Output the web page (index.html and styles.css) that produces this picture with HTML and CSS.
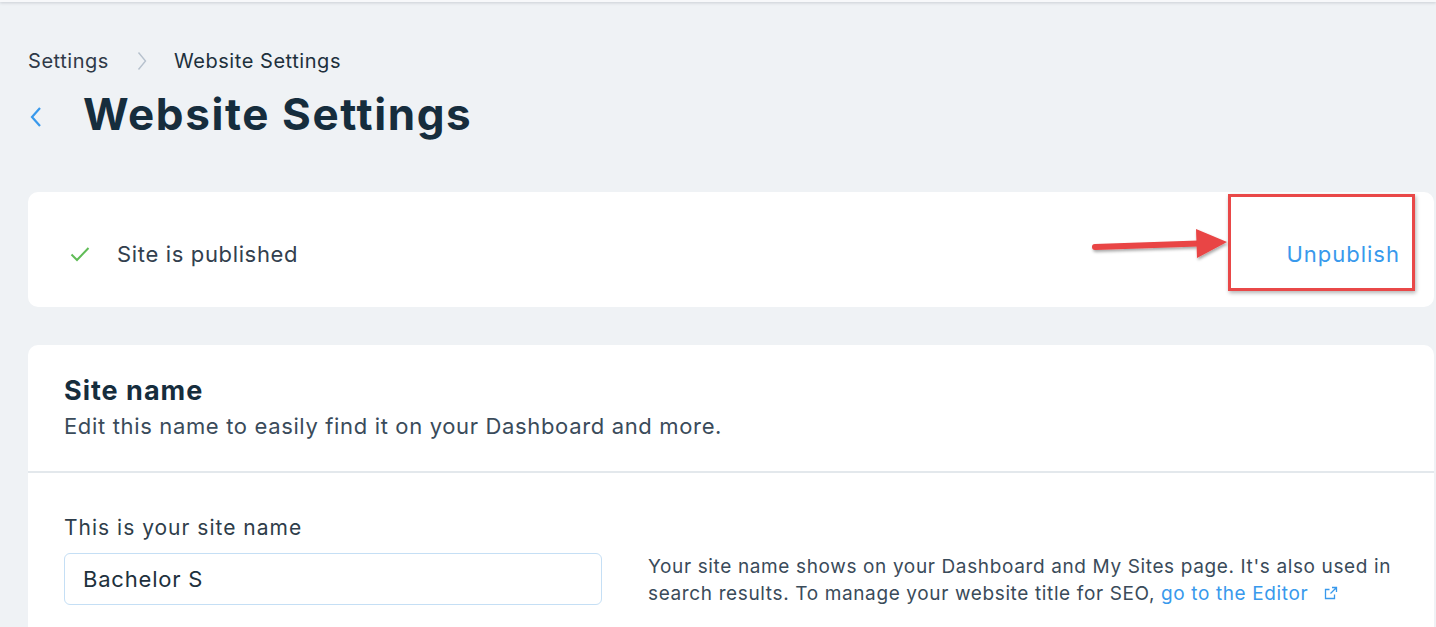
FILE: index.html
```html
<!DOCTYPE html>
<html lang="en">
<head>
<meta charset="utf-8">
<title>Website Settings</title>
<link rel="stylesheet" href="styles.css">
</head>
<body>
<div class="topbar"></div>
<main class="page">
  <nav class="crumbs">
    <span class="crumb">Settings</span>
    <svg class="crumb-sep" width="10" height="20" viewBox="0 0 10 20"><path d="M1.5 1.5 L8.5 10 L1.5 18.5" fill="none" stroke="#b6c1cd" stroke-width="1.4"/></svg>
    <span class="crumb current">Website Settings</span>
  </nav>
  <header class="title-row">
    <svg class="back" width="14" height="22" viewBox="0 0 14 22"><path d="M11 2 L3 11 L11 20" fill="none" stroke="#3899ec" stroke-width="2.2"/></svg>
    <h1 class="title">Website Settings</h1>
  </header>

  <section class="card status-card">
    <div class="status">
      <svg class="check" width="20" height="16" viewBox="0 0 20 16"><path d="M1.5 8.5 L7 14 L18.5 2" fill="none" stroke="#60bc57" stroke-width="2"/></svg>
      <span class="status-text">Site is published</span>
    </div>
    <a class="link unpublish">Unpublish</a>
    <div class="annot-box"></div>
    <svg class="annot-arrow" width="150" height="44" viewBox="0 0 150 44">
      <defs>
        <filter id="sh" x="-10%" y="-30%" width="130%" height="180%">
          <feDropShadow dx="1" dy="2" stdDeviation="1.5" flood-color="#000" flood-opacity="0.35"/>
        </filter>
      </defs>
      <g filter="url(#sh)">
        <path d="M5 25 L108 21.5" stroke="#e94444" stroke-width="6" stroke-linecap="round" fill="none"/>
        <path d="M106 7 L137 20 L107 36 Z" fill="#e94444"/>
      </g>
    </svg>
  </section>

  <section class="card name-card">
    <div class="card-head">
      <h2 class="card-title">Site name</h2>
      <p class="card-sub">Edit this name to easily find it on your Dashboard and more.</p>
    </div>
    <div class="card-body">
      <div class="field">
        <label class="field-label">This is your site name</label>
        <div class="input">Bachelor S</div>
      </div>
      <p class="help">Your site name shows on your Dashboard and My Sites page. It's also used in search results. To manage your website title for SEO, <a class="link">go to the Editor</a><svg class="ext" width="16" height="16" viewBox="0 0 16 16"><path d="M9 2.5 H13.5 V7 M13.5 2.5 L7.5 8.5 M11.5 9.5 V13.5 H2.5 V4.5 H6.5" fill="none" stroke="#3899ec" stroke-width="1.3"/></svg></p>
    </div>
  </section>
</main>
</body>
</html>
```

FILE: styles.css
```css
* { box-sizing: border-box; }
html, body { margin: 0; padding: 0; }
body {
  background: #eff2f5;
  font-family: "Inter", "Open Sans", sans-serif;
  color: #32424f;
  overflow: hidden;
  height: 627px;
}
.topbar {
  height: 2px;
  background: #f7f8fa;
  box-shadow: 0 1px 3px rgba(40, 50, 70, 0.22);
}
.page {
  padding: 0 2px 0 28px;
}
.crumbs {
  display: flex;
  align-items: center;
  height: 28px;
  margin-top: 45px;
  font-size: 20px;
  letter-spacing: 0.55px;
  color: #2f3a48;
}
.crumb-sep { margin: 0 27px 0 28px; }
.crumb.current { color: #20303c; }
.title-row {
  display: flex;
  align-items: center;
  margin-top: 11px;
  height: 56px;
}
.back { margin: 5px 40px 0 1px; }
.title {
  margin: 0;
  font-size: 44px;
  font-weight: 700;
  color: #162d3d;
  letter-spacing: 1.6px;
}
.card {
  background: #fff;
  border-radius: 10px;
}
.status-card {
  position: relative;
  margin-top: 50px;
  height: 115px;
  display: flex;
  align-items: center;
  justify-content: space-between;
  padding: 8px 34px 0 42px;
}
.status { display: flex; align-items: center; }
.check { margin-right: 27px; }
.status-text { font-size: 22px; letter-spacing: 0.65px; color: #32404e; }
.link { color: #3899ec; text-decoration: none; }
.unpublish { font-size: 22px; letter-spacing: 1px; }
.annot-box {
  position: absolute;
  left: 1200px;
  top: 2px;
  width: 187px;
  height: 97px;
  border: 3px solid #e94848;
  box-shadow: 1px 2px 4px rgba(0,0,0,0.3);
}
.annot-arrow {
  position: absolute;
  left: 1062px;
  top: 30px;
}
.name-card {
  margin-top: 38px;
  border-radius: 10px 10px 0 0;
  height: 300px;
}
.card-head {
  padding: 28px 36px 30px 36px;
  border-bottom: 2px solid #e3e8ec;
}
.card-title {
  margin: 0;
  font-size: 27px;
  font-weight: 700;
  letter-spacing: 1px;
  color: #162d3d;
  line-height: 36px;
}
.card-sub {
  margin: 2px 0 0;
  font-size: 22px;
  letter-spacing: 0.65px;
  line-height: 30px;
  color: #3a4b5a;
}
.card-body {
  display: flex;
  align-items: flex-end;
  padding: 41px 36px 0 36px;
}
.field { width: 538px; flex-shrink: 0; }
.field-label {
  display: block;
  font-size: 21px;
  letter-spacing: 1px;
  line-height: 28px;
  color: #2e3d4a;
  margin-bottom: 11px;
}
.input {
  height: 52px;
  border: 1px solid #c5dff5;
  border-radius: 6px;
  padding: 0 18px;
  display: flex;
  align-items: center;
  font-size: 22px;
  letter-spacing: 0.8px;
  color: #20303c;
}
.help {
  flex: 1;
  margin: 0 0 0 46px;
  font-size: 19px;
  letter-spacing: 0.63px;
  line-height: 27px;
  color: #3a4b5a;
  position: relative;
  top: 2px;
}
.ext { margin-left: 15px; vertical-align: -1px; }
```
